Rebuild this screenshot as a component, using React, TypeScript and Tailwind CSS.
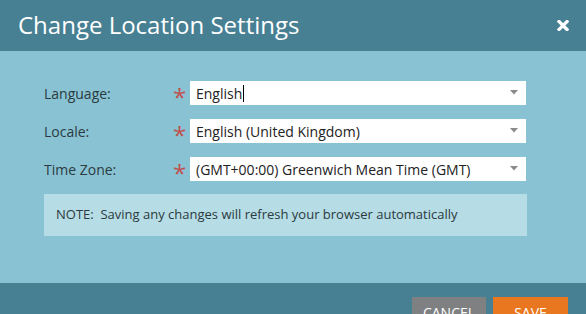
import React from "react";

const font = { fontFamily: '"Open Sans", "Noto Sans", sans-serif' };

function Row({ label, value, caret }: { label: string; value: string; caret?: boolean }) {
  return (
    <div className="flex items-center h-[24px]">
      <div className="w-[129px] text-[14px] text-[#2b3a40]">{label}</div>
      <div className="w-[17px] text-[24px] leading-none text-[#c0504d] pt-[8px]">*</div>
      <div className="relative w-[336px] h-[24px] bg-white flex items-center pl-[6px] text-[14px] text-[#222]">
        <span>{value}</span>
        {caret && <span className="inline-block w-[1px] h-[17px] bg-black ml-[1px]" />}
        <svg className="absolute right-[8px] top-[9px]" width="8" height="5" viewBox="0 0 8 5">
          <polygon points="0,0 8,0 4,4.5" fill="#8a8a8a" />
        </svg>
      </div>
    </div>
  );
}

export default function App() {
  return (
    <div className="w-[586px] h-[314px] overflow-hidden flex flex-col" style={font}>
      <div className="h-[51px] shrink-0 bg-[#477f93] flex items-center justify-between pl-[18px] pr-[17px]">
        <div className="text-white text-[24px] leading-none pb-[2px]">Change Location Settings</div>
        <svg width="12" height="11" viewBox="0 0 12 11">
          <path d="M2 1.5 L10 9.5 M10 1.5 L2 9.5" stroke="white" strokeWidth="3.2" strokeLinecap="square" />
        </svg>
      </div>
      <div className="h-[232px] shrink-0 bg-[#89c3d3] pt-[30px] pl-[44px]">
        <div className="flex flex-col gap-[14px]">
          <Row label="Language:" value="English" caret />
          <Row label="Locale:" value="English (United Kingdom)" />
          <Row label="Time Zone:" value="(GMT+00:00) Greenwich Mean Time (GMT)" />
        </div>
        <div className="mt-[13px] w-[483px] h-[42px] bg-[#b6dce5] flex items-center pl-[12px] text-[13px] text-[#2b3a40]">
          NOTE:&nbsp; Saving any changes will refresh your browser automatically
        </div>
      </div>
      <div className="flex-1 min-h-0 bg-[#477f93] flex justify-end items-start pt-[14px] pr-[18px] gap-[7px]">
        <div className="w-[74px] h-[28px] shrink-0 bg-[#7f8082] text-white text-[14px] flex items-center justify-center pt-[2px]">CANCEL</div>
        <div className="w-[75px] h-[28px] shrink-0 bg-[#e8771f] text-white text-[14px] flex items-center justify-center pt-[2px]">SAVE</div>
      </div>
    </div>
  );
}
